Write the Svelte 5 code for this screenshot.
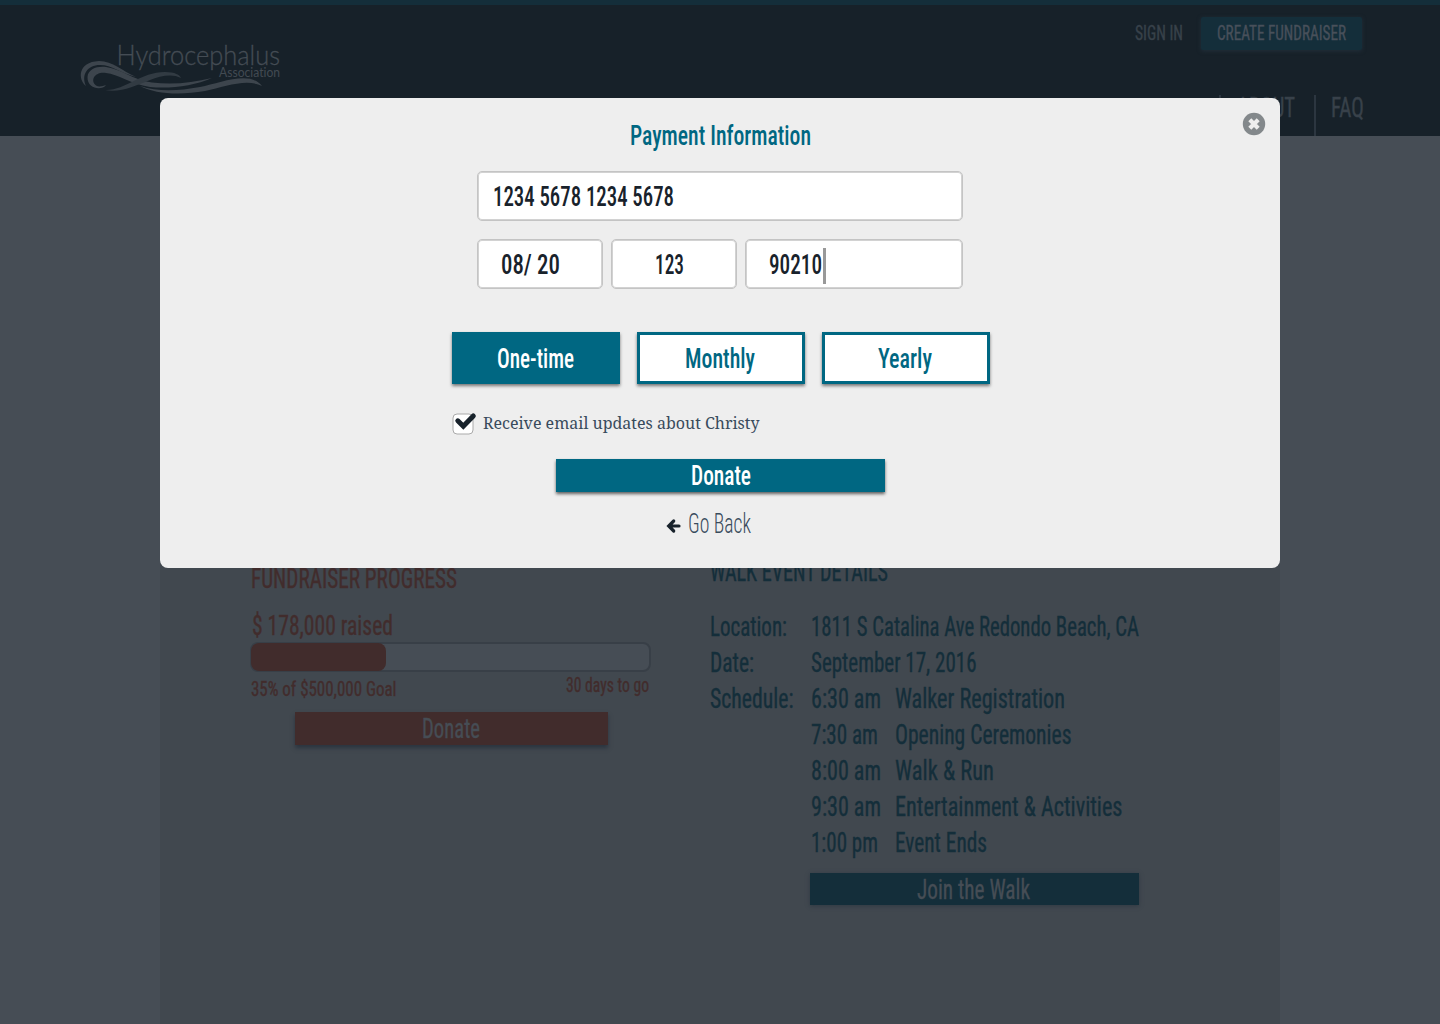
<script>
  const details = [
    { label: 'Location:', lw: 77, value: '1811 S Catalina Ave Redondo Beach, CA', vw: 328 },
    { label: 'Date:', lw: 44, value: 'September 17, 2016', vw: 165.5 },
    { label: 'Schedule:', lw: 83.5, value: '6:30 am', vw: 70, item: 'Walker Registration', iw: 170 },
    { label: '', value: '7:30 am', vw: 67, item: 'Opening Ceremonies', iw: 176.5 },
    { label: '', value: '8:00 am', vw: 70, item: 'Walk & Run', iw: 99 },
    { label: '', value: '9:30 am', vw: 70, item: 'Entertainment & Activities', iw: 227.5 },
    { label: '', value: '1:00 pm', vw: 67, item: 'Event Ends', iw: 92 }
  ];
  let plan = $state('One-time');
  const plans = [
    { name: 'One-time', w: 77 },
    { name: 'Monthly', w: 70 },
    { name: 'Yearly', w: 54 }
  ];
</script>

<!-- Condensed heading text, set to a given width -->
{#snippet big(text, w)}
  <svg class="big" width={w} height="30"><text x="0" y="25" textLength={w} lengthAdjust="spacingAndGlyphs">{text}</text></svg>
{/snippet}
{#snippet small(text, w)}
  <svg class="small" width={w} height="20"><text x="0" y="17" textLength={w} lengthAdjust="spacingAndGlyphs">{text}</text></svg>
{/snippet}

<div class="page">
  <header>
    <svg class="logo" width="210" height="60" viewBox="75 38 210 60">
      <path d="M86 86C78 80 77 62 99 61C113 61 122 71 136 77C120 73 112 65 100 65C87 65 81 75 86 86Z" />
      <path d="M106 85C102 91 87 89 87.500 77C88 69 97 66 106 67C122 69 132 80 152 82.500C172 85 192 83 212 78C194 86 170 89 150 87C130 84 118 74 106 73C94 71.500 90 81 96 85.500C99 87.500 103 86 106 85Z" />
      <path class="faint" d="M105 90C125 91 140 72 165 72C175 72 180 75 181 78C172 73 160 76 150 80C135 86 120 93 105 90Z" />
      <path d="M140 86C158 92 178 91 200 87C220 83 250 70 262 86C246 78 225 87 205 91C180 95.500 155 94 140 86Z" />
      <text class="word" x="116.500" y="64.500" textLength="163.500" lengthAdjust="spacingAndGlyphs">Hydrocephalus</text>
      <text class="sub" x="219" y="76.700" textLength="61" lengthAdjust="spacingAndGlyphs">Association</text>
    </svg>
    <div class="right">
      <div class="account">
        {@render small('SIGN IN', 48)}
        <button class="create">{@render small('CREATE FUNDRAISER', 129)}</button>
      </div>
      <nav>
        <a href="#about">{@render big('ABOUT', 58)}</a>
        <a href="#faq">{@render big('FAQ', 33)}</a>
      </nav>
    </div>
  </header>

  <main>
    <section class="progress">
      {@render big('FUNDRAISER PROGRESS', 206)}
      <div class="raised">{@render big('$ 178,000 raised', 141)}</div>
      <div class="track"><div class="fill"></div></div>
      <div class="stats">
        <div class="goal">{@render small('35% of $500,000 Goal', 145.5)}</div>
        {@render small('30 days to go', 83)}
      </div>
      <button class="give">{@render big('Donate', 58)}</button>
    </section>
    <section class="event">
      {@render big('WALK EVENT DETAILS', 178)}
      <div class="rows">
        {#each details as d}
          <div class="row">
            <div class="key">{#if d.label}{@render big(d.label, d.lw)}{/if}</div>
            <div class="val">{@render big(d.value, d.vw)}</div>
            {#if d.item}{@render big(d.item, d.iw)}{/if}
          </div>
        {/each}
      </div>
      <button class="join">{@render big('Join the Walk', 113)}</button>
    </section>
  </main>
</div>

<div class="modal">
  <button class="close" aria-label="Close">
    <svg width="24" height="24" viewBox="0 0 24 24"><circle cx="12" cy="12" r="11.200" /><path d="M7.800 7.800L16.200 16.200M16.200 7.800L7.800 16.200" /></svg>
  </button>
  <div class="title">{@render big('Payment Information', 181)}</div>
  <div class="fields">
    <div class="field card">{@render big('1234 5678 1234 5678', 181)}</div>
    <div class="field exp">{@render big('08/ 20', 59)}</div>
    <div class="field cvc">{@render big('123', 29)}</div>
    <div class="field zip">{@render big('90210', 53)}<span class="caret"></span></div>
  </div>
  <div class="plans">
    {#each plans as p}
      <button class:active={plan === p.name} onclick={() => (plan = p.name)}>{@render big(p.name, p.w)}</button>
    {/each}
  </div>
  <div class="updates">
    <svg class="check" width="26" height="26" viewBox="0 0 26 26"><rect x="2" y="4" width="20" height="20" rx="4" /><path d="M6.800 10.800L12.300 16.200L22.300 6" /></svg>
    <svg class="note" width="276" height="24"><text x="0" y="18" textLength="276.5" lengthAdjust="spacingAndGlyphs">Receive email updates about Christy</text></svg>
  </div>
  <button class="donate">{@render big('Donate', 60)}</button>
  <div class="back">
    <svg class="arrow" width="14" height="14" viewBox="0 0 14 14"><path d="M13 7H3M7.700 2L2.700 7L7.700 12" /></svg>
    {@render big('Go Back', 63)}
  </div>
</div>

<style>
  :global(body) { margin: 0; background: #464d55; }
  svg { display: block; overflow: visible; flex: none; }
  button { border: 0; padding: 0; margin: 0; display: flex; justify-content: center; box-sizing: border-box; }
  .big, .small { font-family: Roboto, "Liberation Sans", sans-serif; font-stretch: 75%; font-weight: 500; fill: currentColor; }
  .big { font-size: 27px; }
  .small { font-size: 19.500px; }

  .page { width: 1440px; height: 1024px; overflow: hidden; background: #464d55; }
  .page :global(.big), .page :global(.small) { font-weight: 400; stroke: currentColor; stroke-width: 0.350px; }
  header { height: 136px; box-sizing: border-box; border-top: 5px solid #142e3a; background: #172129; display: flex; justify-content: space-between; padding: 0 76px 0 75px; color: #38414a; }
  .logo { margin-top: 33px; fill: #3d454d; }
  .logo .faint { fill: #323b43; }
  .word { font: 300 28px Lato, sans-serif; fill: #444c54; stroke: #444c54; stroke-width: 0.300px; }
  .sub { font: 400 12.500px Lato, sans-serif; font-variant-ligatures: none; fill: #424a52; }
  .right { display: flex; flex-direction: column; align-items: flex-end; }
  .account { display: flex; padding: 12px 2px 0 0; gap: 17px; }
  .account > :global(svg) { margin: 6px 1px 0 0; }
  .create { width: 161px; height: 33px; padding-top: 6px; background: #142e3a; color: #48505a; border-radius: 2px; box-shadow: 0 1px 4px #22303b; }
  nav { display: flex; margin-top: 45px; height: 41px; }
  nav a { color: inherit; padding: 0 19px 0 16px; border-left: 2px solid #2c3640; }
  nav a + a { padding: 0 0 0 15px; }
  nav a :global(svg) { margin-top: -3px; }

  main { width: 1120px; height: 888px; margin: 0 auto; box-sizing: border-box; background: #41484f; display: grid; grid-template-columns: 400px 430px; column-gap: 59px; padding: 420px 0 0 91px; }
  .progress { color: #412c2c; padding-top: 7px; }
  .raised { padding: 17px 0 0 1px; }
  .track { width: 401px; height: 30px; margin: 2px 0 0 -1px; box-sizing: border-box; border: 2px solid #383f47; border-radius: 8px; background: #464d55; }
  .fill { width: 135px; height: 28px; margin: -1px; border-radius: 8px; background: #412c2c; }
  .stats { display: flex; justify-content: space-between; width: 398px; padding-top: 3px; }
  .goal { padding-top: 4px; }
  .give { width: 313px; height: 33px; margin: 13px 0 0 43.5px; padding-top: 1px; background: #412c2c; color: #464d55; box-shadow: 0 3px 4px #2b343f; }
  .event { color: #142e3a; }
  .rows { padding-top: 25px; }
  .row { display: flex; height: 36px; }
  .key { width: 101px; }
  .val { min-width: 84px; }
  .join { width: 329px; height: 32px; margin: 10px 0 0 100px; padding: 1px 2px 0 0; background: #142e3a; color: #464d55; box-shadow: 0 1px 4px #2f3943; }

  .modal { position: absolute; left: 160px; top: 98px; width: 1120px; height: 470px; background: #eee; border-radius: 8px; display: flex; flex-direction: column; align-items: center; color: #18222b; }
  .close { position: absolute; right: 14px; top: 14px; background: none; }
  .close circle { fill: #83888b; }
  .close path { stroke: #eee; stroke-width: 4.200; fill: none; }
  .title { color: #006782; padding-top: 22px; }
  .fields { display: grid; grid-template-columns: 126px 126px 218px; column-gap: 8px; row-gap: 18px; margin-top: 21px; }
  .field { height: 50px; box-sizing: border-box; background: #fff; border: 1px solid #c4c4c4; box-shadow: inset 0 0 0 1px #d2d2d2; border-radius: 5px; padding-top: 9px; display: flex; }
  .card { grid-column: 1 / 4; padding-left: 15px; }
  .exp { padding-left: 23px; }
  .cvc { padding-left: 43px; }
  .zip { padding-left: 23px; }
  .caret { width: 3px; height: 36px; margin: -1px 0 0 1px; background: #999; }
  .plans { display: flex; gap: 17px; margin: 43px 0 0 1px; }
  .plans button { width: 168px; height: 52px; border: 3px solid #006782; background: #fff; color: #006782; padding: 8px 1px 0 0; box-shadow: 0 2px 3px rgba(0, 0, 0, 0.500); }
  .plans button.active { background: #006782; color: #fff; }
  .updates { display: flex; align-self: flex-start; padding: 26px 0 0 291px; gap: 6px; }
  .check rect { fill: #fff; stroke: #aaa; }
  .check path { fill: none; stroke: #18222b; stroke-width: 5; stroke-linecap: round; }
  .note { margin-top: 1px; font-family: "Noto Serif", "Droid Serif", "DejaVu Serif", serif; font-size: 16px; fill: #394b5c; }
  .donate { width: 329px; height: 33px; margin: 23px 0 0 1px; padding-top: 1px; background: #006782; color: #fff; box-shadow: 0 2px 3px rgba(0, 0, 0, 0.600); }
  .back { display: flex; align-self: flex-start; padding: 16px 0 0 506px; gap: 8px; color: #394b5c; }
  .back :global(.big) { font-weight: 300; }
  .arrow { margin-top: 11px; }
  .arrow path { fill: none; stroke: #18222b; stroke-width: 3.200; stroke-linecap: round; }
</style>
